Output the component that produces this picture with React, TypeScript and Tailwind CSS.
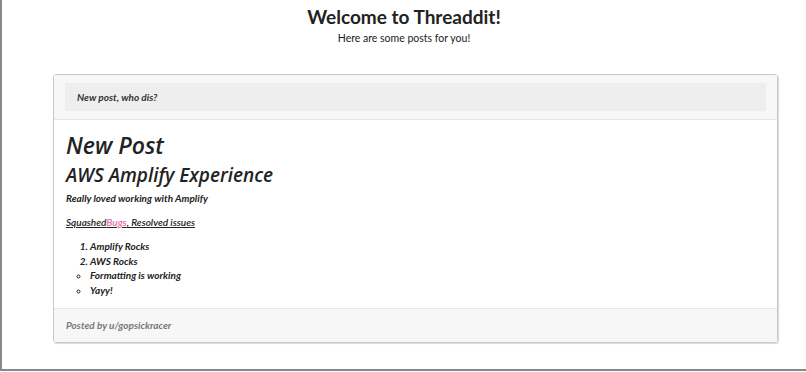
import React from "react";

export default function App() {
  return (
    <div className="h-[372px] w-[806px] overflow-hidden bg-white" style={{ fontFamily: '"Lato", sans-serif' }}>
      <div className="h-[371px] border-l-2 border-b-2 border-[#888] bg-white">
        <div className="pt-[5px] text-center">
          <h1 className="text-[19px] leading-[24px] font-bold text-[#222]" style={{ fontFamily: '"Lato", sans-serif' }}>
            Welcome to Threaddit!
          </h1>
          <p className="mt-[3px] text-[10.5px] leading-[12px] text-[#222]">Here are some posts for you!</p>
        </div>
        <div className="ml-[51px] mt-[30px] w-[725px] rounded-[3px] border border-[#c8c8c8] shadow-[1px_1px_1px_rgba(0,0,0,0.15)]" style={{ fontFamily: '"Lato", sans-serif' }}>
          <div className="border-b border-[#e6e6e6] bg-[#f7f7f7] px-[11px] py-[8px]">
            <div className="flex h-[28px] items-center bg-[#eeeeee] px-[12px] text-[10px] font-bold italic text-[#333]">
              New post, who dis?
            </div>
          </div>
          <div className="bg-white px-[12px] pt-[10px] pb-[11px] text-[#222] italic">
            <h2 className="text-[23px] leading-[30px] font-semibold" style={{ fontFamily: '"Open Sans", sans-serif' }}>New Post</h2>
            <h3 className="mt-[2px] text-[19px] leading-[26px] font-semibold" style={{ fontFamily: '"Open Sans", sans-serif' }}>AWS Amplify Experience</h3>
            <p className="mt-[4px] text-[10px] leading-[12px] font-bold">Really loved working with Amplify</p>
            <p className="mt-[12px] text-[10px] leading-[12px] font-semibold underline">
              Squashed<span className="text-[#e26aa9]">Bugs</span>, Resolved issues
            </p>
            <ol className="mt-[11px] list-decimal pl-[24px] text-[10px] leading-[14.5px] font-bold">
              <li>Amplify Rocks</li>
              <li>AWS Rocks</li>
            </ol>
            <ul className="list-[circle] pl-[24px] text-[10px] leading-[14.5px] font-bold">
              <li>Formatting is working</li>
              <li>Yayy!</li>
            </ul>
          </div>
          <div className="flex h-[34px] items-center border-t border-[#e6e6e6] bg-[#f7f7f7] px-[12px] text-[10px] font-bold italic text-[#777]">
            Posted by u/gopsickracer
          </div>
        </div>
      </div>
    </div>
  );
}
